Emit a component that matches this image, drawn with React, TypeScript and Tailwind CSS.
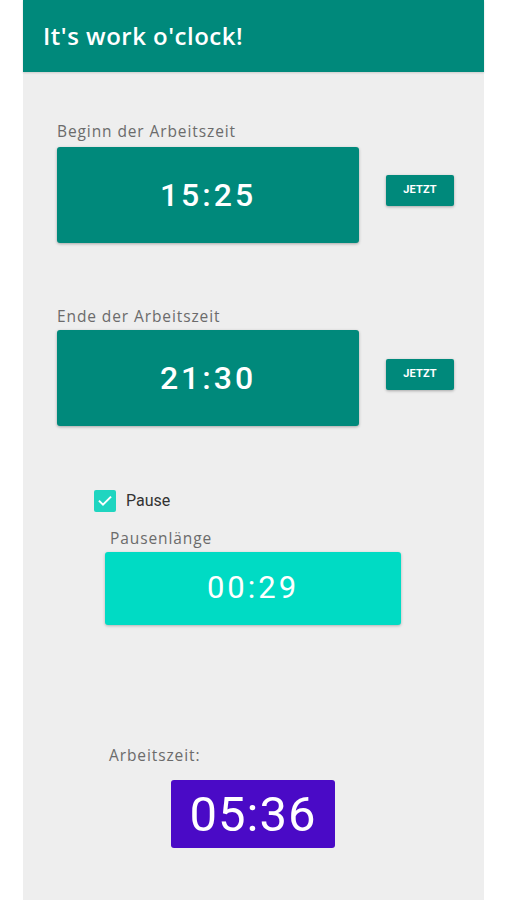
import React from "react";

const label = "text-[15.5px] leading-[20px] text-[#6b6b6b] tracking-[0.9px]";
const labelFont = { fontFamily: '"Open Sans", "Lato", sans-serif' };

function Jetzt({ top }: { top: string }) {
  return (
    <button
      className={`${top} self-start w-[68px] h-[31px] rounded-[2px] bg-[#00897b] text-white text-[11px] font-bold tracking-[0.2px] shadow-[0_1px_3px_rgba(0,0,0,0.3)] flex items-center justify-center`}
      style={{ fontFamily: 'Roboto, sans-serif' }}
    >
      JETZT
    </button>
  );
}

function TimeBox({ value }: { value: string }) {
  return (
    <div
      className="w-[302px] h-[96px] rounded-[3px] bg-[#00897b] shadow-[0_1px_3px_rgba(0,0,0,0.3)] flex items-center justify-center text-white text-[32px] font-medium tracking-[3px]"
      style={{ fontFamily: 'Roboto, sans-serif' }}
    >
      {value}
    </div>
  );
}

export default function App() {
  return (
    <div className="w-[506px] h-[900px] bg-white overflow-hidden">
      <div className="ml-[23px] w-[461px] h-[900px] bg-[#eeeeee] flex flex-col">
        <div className="h-[72px] bg-[#00897b] flex items-center pl-[20px] shrink-0 shadow-[0_1px_2px_rgba(0,0,0,0.15)]">
          <span
            className="text-white text-[24px] font-semibold leading-none tracking-[0.5px]"
            style={labelFont}
          >
            It's work o'clock!
          </span>
        </div>

        <div className="pl-[34px] flex flex-col">
          <div className={`${label} mt-[49px]`} style={labelFont}>
            Beginn der Arbeitszeit
          </div>
          <div className="mt-[6px] flex gap-[27px]">
            <TimeBox value="15:25" />
            <Jetzt top="mt-[28px]" />
          </div>

          <div className={`${label} mt-[63px]`} style={labelFont}>
            Ende der Arbeitszeit
          </div>
          <div className="mt-[4px] flex gap-[27px]">
            <TimeBox value="21:30" />
            <Jetzt top="mt-[29px]" />
          </div>
        </div>

        <div className="pl-[71px] mt-[63px] flex items-center gap-[10px]">
          <div className="w-[22px] h-[22px] rounded-[2px] bg-[#1fd5c0] flex items-center justify-center">
            <svg width="16" height="16" viewBox="0 0 24 24" fill="none">
              <path d="M4 12.5l5 5L20 6.5" stroke="white" strokeWidth="3" strokeLinecap="square" />
            </svg>
          </div>
          <span className="text-[16px] text-[#333333]" style={{ fontFamily: 'Roboto, sans-serif' }}>
            Pause
          </span>
        </div>

        <div className="pl-[82px] flex flex-col">
          <div className={`${label} mt-[15px] pl-[5px]`} style={labelFont}>
            Pausenlänge
          </div>
          <div
            className="mt-[4px] w-[296px] h-[73px] rounded-[3px] bg-[#00dbc4] shadow-[0_1px_3px_rgba(0,0,0,0.25)] flex items-center justify-center text-white text-[31px] tracking-[3px]"
            style={{ fontFamily: 'Roboto, sans-serif' }}
          >
            00:29
          </div>
        </div>

        <div className="pl-[86px] flex flex-col">
          <div className={`${label} mt-[120px]`} style={labelFont}>
            Arbeitszeit:
          </div>
          <div
            className="mt-[15px] ml-[62px] w-[164px] h-[68px] rounded-[3px] bg-[#4a0ac6] flex items-center justify-center text-white text-[49px] tracking-[1px] leading-none"
            style={{ fontFamily: 'Roboto, sans-serif' }}
          >
            05:36
          </div>
        </div>
      </div>
    </div>
  );
}
